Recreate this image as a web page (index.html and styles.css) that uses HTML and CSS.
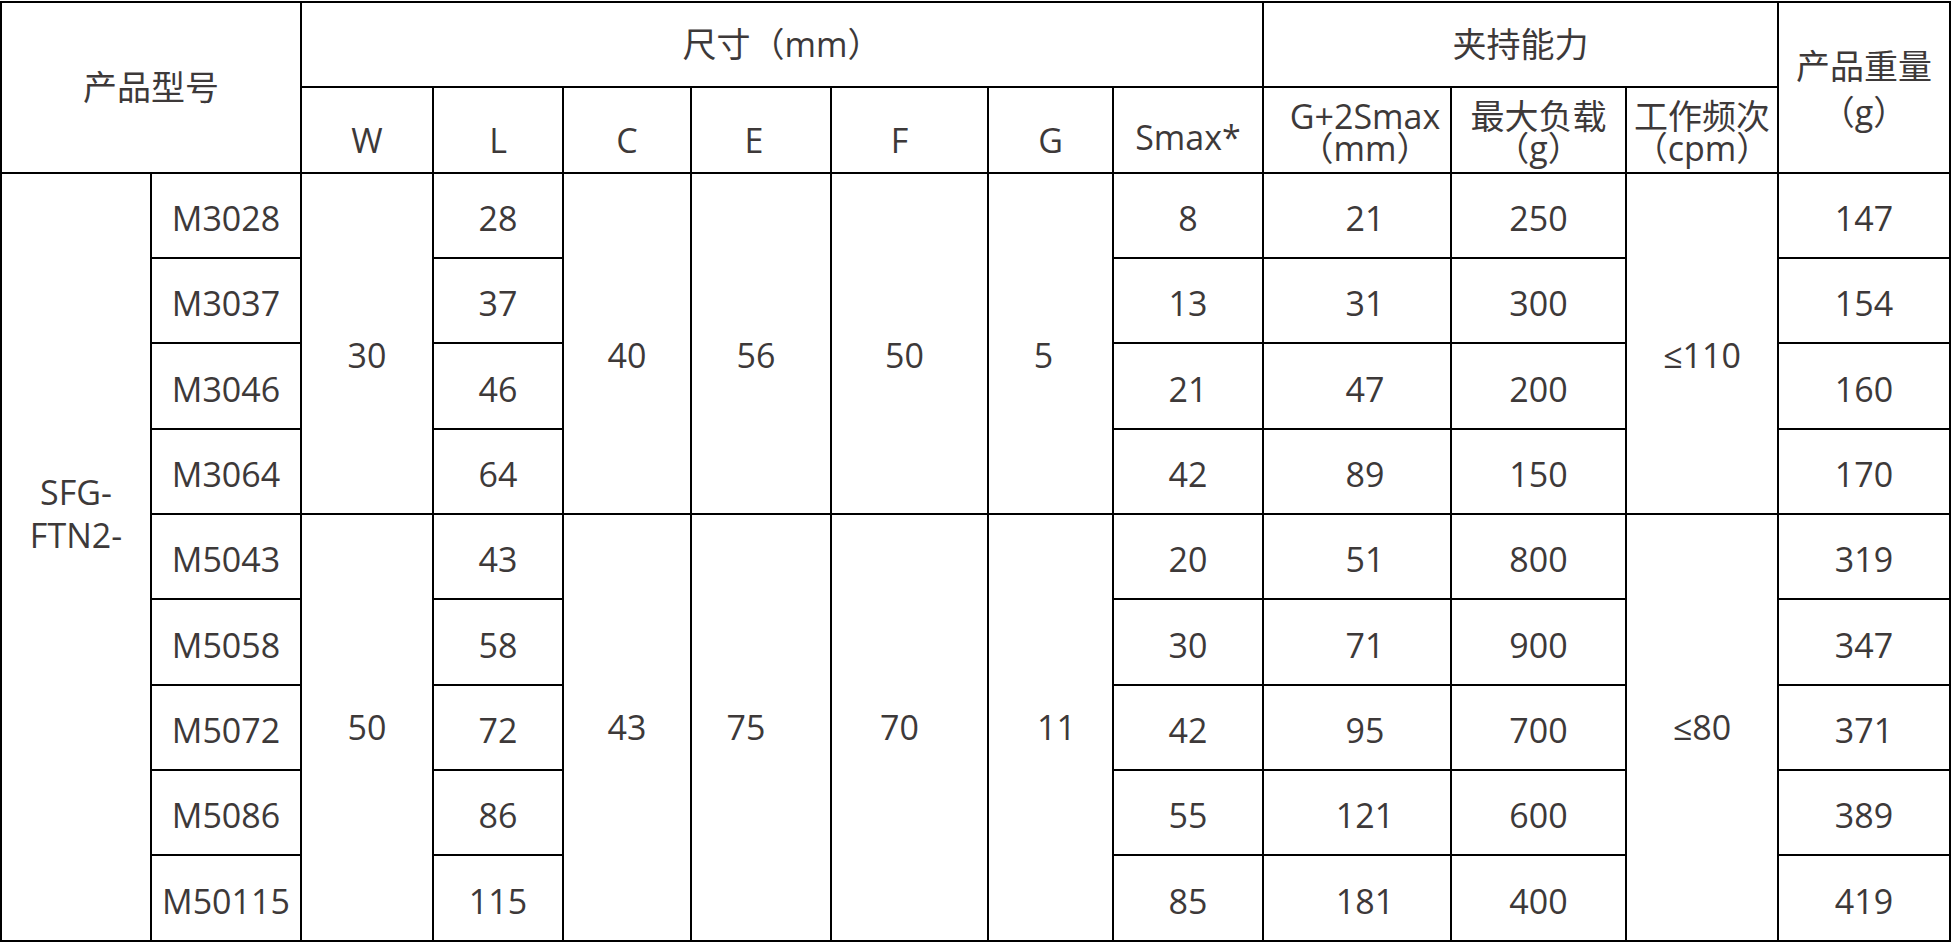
FILE: index.html
```html
<!DOCTYPE html>
<html lang="zh-CN">
<head>
<meta charset="utf-8">
<title>SFG-FTN2 规格表</title>
<link rel="stylesheet" href="styles.css">
</head>
<body>
<div class="spec" role="table">
  <div class="cell head c2 r2">产品型号</div>
  <div class="cell head c7">尺寸（mm）</div>
  <div class="cell head c3">夹持能力</div>
  <div class="cell head r2 loose">产品重量<br>（g）</div>

  <div class="cell head low">W</div>
  <div class="cell head low">L</div>
  <div class="cell head low">C</div>
  <div class="cell head low left-s">E</div>
  <div class="cell head low left-m">F</div>
  <div class="cell head low">G</div>
  <div class="cell head lowish">Smax*</div>
  <div class="cell head tight right">G+2Smax<br>（mm）</div>
  <div class="cell head tight">最大负载<br>（g）</div>
  <div class="cell head tight">工作频次<br>（cpm）</div>

  <div class="cell r9 series">SFG-<br>FTN2-</div>
  <div class="cell d">M3028</div>
  <div class="cell r4 up">30</div>
  <div class="cell d">28</div>
  <div class="cell r4 up">40</div>
  <div class="cell r4 up left-xs">56</div>
  <div class="cell r4 up left-xs">50</div>
  <div class="cell r4 up left-s">5</div>
  <div class="cell d">8</div>
  <div class="cell d right">21</div>
  <div class="cell d">250</div>
  <div class="cell r4 up">≤110</div>
  <div class="cell d">147</div>

  <div class="cell d">M3037</div>
  <div class="cell d">37</div>
  <div class="cell d">13</div>
  <div class="cell d right">31</div>
  <div class="cell d">300</div>
  <div class="cell d">154</div>

  <div class="cell d">M3046</div>
  <div class="cell d">46</div>
  <div class="cell d">21</div>
  <div class="cell d right">47</div>
  <div class="cell d">200</div>
  <div class="cell d">160</div>

  <div class="cell d">M3064</div>
  <div class="cell d">64</div>
  <div class="cell d">42</div>
  <div class="cell d right">89</div>
  <div class="cell d">150</div>
  <div class="cell d">170</div>

  <div class="cell d">M5043</div>
  <div class="cell r5">50</div>
  <div class="cell d">43</div>
  <div class="cell r5">43</div>
  <div class="cell r5 left-l">75</div>
  <div class="cell r5 left-m">70</div>
  <div class="cell r5 right-s">11</div>
  <div class="cell d">20</div>
  <div class="cell d right">51</div>
  <div class="cell d">800</div>
  <div class="cell r5">≤80</div>
  <div class="cell d">319</div>

  <div class="cell d">M5058</div>
  <div class="cell d">58</div>
  <div class="cell d">30</div>
  <div class="cell d right">71</div>
  <div class="cell d">900</div>
  <div class="cell d">347</div>

  <div class="cell d">M5072</div>
  <div class="cell d">72</div>
  <div class="cell d">42</div>
  <div class="cell d right">95</div>
  <div class="cell d">700</div>
  <div class="cell d">371</div>

  <div class="cell d">M5086</div>
  <div class="cell d">86</div>
  <div class="cell d">55</div>
  <div class="cell d right">121</div>
  <div class="cell d">600</div>
  <div class="cell d">389</div>

  <div class="cell d">M50115</div>
  <div class="cell d">115</div>
  <div class="cell d">85</div>
  <div class="cell d right">181</div>
  <div class="cell d">400</div>
  <div class="cell d">419</div>
</div>
</body>
</html>
```

FILE: styles.css
```css
html, body {
  margin: 0;
  padding: 0;
  background: #ffffff;
}

.spec {
  display: grid;
  grid-template-columns: 148px 148px 130px 128px 126px 138px 155px 123px 148px 186px 173px 150px 170px;
  grid-template-rows: repeat(11, 83.33px);
  gap: 2px;
  padding: 2px;
  margin-top: 1px;
  width: 1951px;
  box-sizing: border-box;
  background: #000000;
  font-family: "Open Sans", "Noto Sans CJK SC", sans-serif;
  font-size: 34px;
  color: #3d3939;
}

.cell {
  background: #ffffff;
  display: flex;
  align-items: center;
  justify-content: center;
  text-align: center;
  line-height: 1.25;
  box-sizing: border-box;
}

.c2 { grid-column: span 2; }
.c3 { grid-column: span 3; }
.c7 { grid-column: span 7; }
.r2 { grid-row: span 2; }
.r4 { grid-row: span 4; }
.r5 { grid-row: span 5; }
.r9 { grid-row: span 9; }

.head.low { padding-top: 20px; }
.head.lowish { padding-top: 14px; }
.head.tight { line-height: 0.94; padding-top: 6px; }
.head.loose { line-height: 1.35; padding-top: 6px; }

.d { padding-top: 6px; }
.up { padding-top: 24px; }

/* small horizontal nudges matching the source sheet */
.right { padding-left: 16px; }
.right-s { padding-left: 12px; }
.left-xs { padding-right: 10px; }
.left-s { padding-right: 14px; }
.left-m { padding-right: 20px; }
.left-l { padding-right: 30px; }

.series {
  line-height: 1.24;
  padding-bottom: 86px;
}
```
